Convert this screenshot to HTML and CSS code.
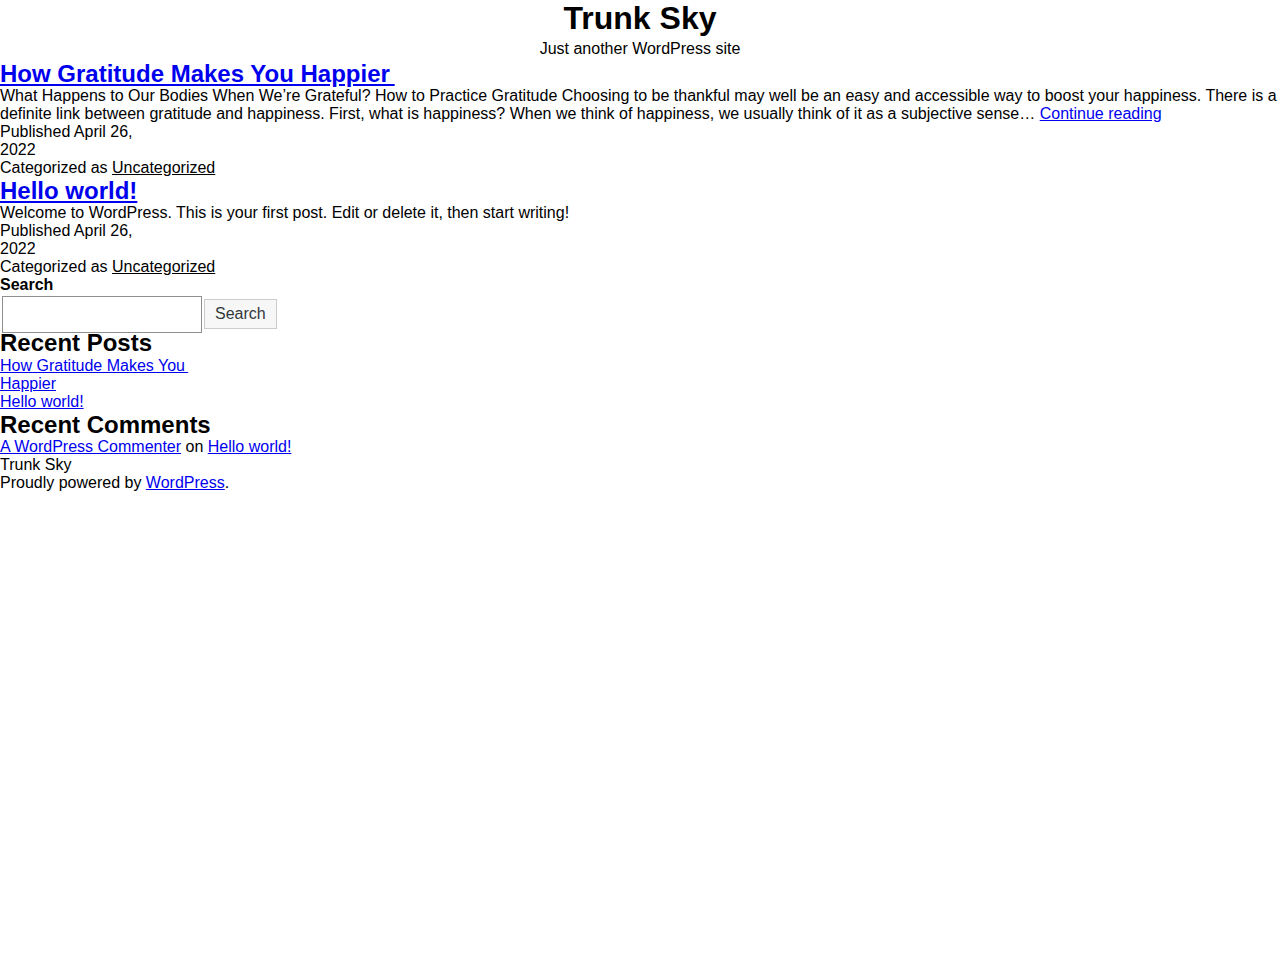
FILE: index.html
```html
<!DOCTYPE html>
<html lang="en">
<head>
<meta charset="utf-8">
<title>Trunk Sky – Just another WordPress site</title>
<link rel="stylesheet" href="styles.css">
</head>
<body>
<header class="site-header">
  <h1 class="site-title">Trunk Sky</h1>
  <p class="site-description">Just another WordPress site</p>
</header>
<main class="site-main">
  <article class="post">
    <h2 class="entry-title"><a href="#">How Gratitude Makes You Happier&#8201;</a></h2>
    <div class="entry-content">What Happens to Our Bodies When We’re Grateful? How to Practice Gratitude Choosing to be thankful may well be an easy and accessible way to boost your happiness. There is a definite link between gratitude and happiness. First, what is happiness? When we think of happiness, we usually think of it as a subjective sense… <a href="#">Continue reading</a></div>
    <div class="entry-footer">
      <div class="posted-on">Published April 26,<br>2022</div>
      <div class="cat-links">Categorized as <a class="cat" href="#">Uncategorized</a></div>
    </div>
  </article>
  <article class="post">
    <h2 class="entry-title"><a href="#">Hello world!</a></h2>
    <div class="entry-content">Welcome to WordPress. This is your first post. Edit or delete it, then start writing!</div>
    <div class="entry-footer">
      <div class="posted-on">Published April 26,<br>2022</div>
      <div class="cat-links">Categorized as <a class="cat" href="#">Uncategorized</a></div>
    </div>
  </article>
</main>
<aside class="widget-area">
  <form class="search-form">
    <label class="search-label" for="s">Search</label>
    <div class="search-row">
      <input class="search-input" id="s" type="search">
      <button class="search-button" type="button">Search</button>
    </div>
  </form>
  <section class="widget">
    <h2 class="widget-title">Recent Posts</h2>
    <ul class="widget-list">
      <li><a href="#">How Gratitude Makes You&#8201;<br>Happier</a></li>
      <li><a href="#">Hello world!</a></li>
    </ul>
  </section>
  <section class="widget">
    <h2 class="widget-title">Recent Comments</h2>
    <ul class="widget-list">
      <li><a href="#">A WordPress Commenter</a> on <a href="#">Hello world!</a></li>
    </ul>
  </section>
</aside>
<footer class="site-footer">
  <div class="footer-name">Trunk Sky</div>
  <div class="powered">Proudly powered by <a href="#">WordPress</a>.</div>
</footer>
</body>
</html>
```

FILE: styles.css
```css
html, body {
  margin: 0;
  padding: 0;
  background: #fff;
}
body {
  font-family: "Liberation Sans", Arial, sans-serif;
  font-size: 16px;
  color: #000;
}
a {
  color: #0000ee;
  text-decoration: underline;
}
.site-header {
  text-align: center;
}
.site-title {
  margin: 0 0 3px;
  font-size: 32px;
  font-weight: bold;
}
.site-description {
  margin: 0;
}
.site-main {
  padding-top: 2px;
}
.entry-title {
  margin: 0;
  font-size: 24px;
  line-height: 27px;
  font-weight: bold;
}
.entry-content {
  margin: 0;
}
.cat {
  color: #000;
}
.search-form {
  margin: 0;
}
.search-label {
  display: block;
  font-weight: bold;
}
.search-row {
  display: flex;
  align-items: flex-start;
  height: 35px;
}
.search-input {
  width: 200px;
  height: 37px;
  box-sizing: border-box;
  margin: 2px 2px 0;
  border: 1px solid #8f8f8f;
  padding: 0 4px;
  font: inherit;
  background: #fff;
}
.search-button {
  height: 30px;
  box-sizing: border-box;
  margin: 5px 0 0;
  padding: 0 10px;
  border: 1px solid #cccccc;
  background: #f7f7f7;
  color: #32373c;
  font-family: "Liberation Sans", Arial, sans-serif;
  font-size: 16px;
}
.widget-title {
  margin: 0;
  font-size: 24px;
  line-height: 27.5px;
  font-weight: bold;
}
.widget-list {
  list-style: none;
  margin: 0;
  padding: 0;
}
```
